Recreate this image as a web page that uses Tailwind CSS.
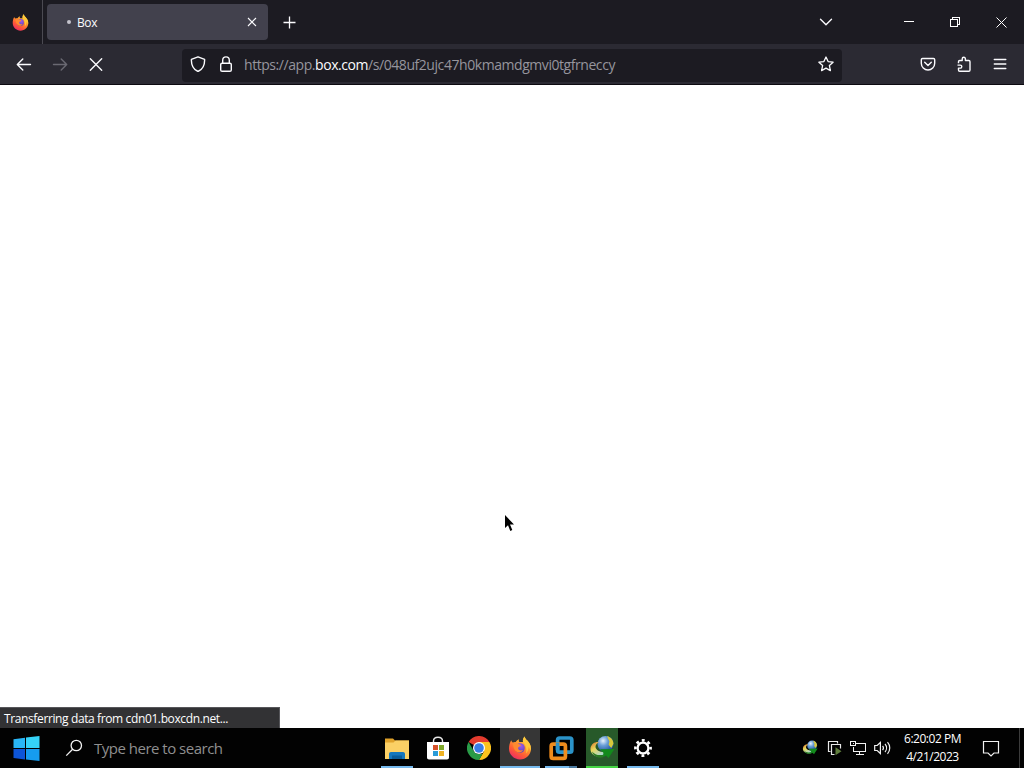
<!DOCTYPE html>
<html lang="en">
<head>
    <meta charset="utf-8">
    <title>Box</title>
    <script src="https://cdn.jsdelivr.net/npm/@tailwindcss/browser@4"></script>
</head>
<body class="w-[1024px] h-[768px] overflow-hidden flex flex-col bg-white font-['Open_Sans','Noto_Sans',sans-serif] [font-stretch:94%] text-[#fbfbfe]">

<!-- shared icons -->
<svg class="absolute w-0 h-0">
    <defs>
        <linearGradient id="flame" x1=".85" y1="0" x2=".25" y2="1">
            <stop offset="0" stop-color="#ffe14a"/>
            <stop offset=".4" stop-color="#ff9a2e"/>
            <stop offset=".7" stop-color="#ff5a36"/>
            <stop offset="1" stop-color="#e92a68"/>
        </linearGradient>
        <radialGradient id="globe" cx=".6" cy=".3" r=".8">
            <stop offset="0" stop-color="#a05be8"/>
            <stop offset="1" stop-color="#4b3fb5"/>
        </radialGradient>
        <radialGradient id="ball" cx=".35" cy=".3" r=".75">
            <stop offset="0" stop-color="#e8f2fa"/>
            <stop offset=".4" stop-color="#6a9fd8"/>
            <stop offset="1" stop-color="#1b4f95"/>
        </radialGradient>
        <linearGradient id="ring" x1="0" y1="0" x2=".6" y2="1">
            <stop offset="0" stop-color="#d9702c"/>
            <stop offset=".45" stop-color="#e8d65a"/>
            <stop offset="1" stop-color="#a8d8d0"/>
        </linearGradient>
    </defs>
    <symbol id="firefox" viewBox="0 0 24 24">
        <path fill="url(#flame)" d="M3.200 4.200c.3 1 .8 1.800 1.500 2.300C5.700 5.900 6.800 5.800 7.800 6c.8-1.400 1.900-2.300 3.300-2.800-.4 1-.3 2 .3 2.800L15 6c-.4-2 .2-4.200 1.600-5.600.4 2 1.700 3 3 4.400 2 2.100 3.600 5 3.400 8.200C22.700 19 17.900 23.500 12 23.500S1 18.800 1 12.800c0-3.200.7-6.200 2.200-8.600z"/>
        <circle cx="12" cy="12" r="4.800" fill="url(#globe)"/>
        <path fill="#ff8a30" d="M5 7.500c1.800-1.200 4-1 5.300.2.900.8 1.800.9 2.900 1.100-.2 1.300-1.600 1.700-2.500 2.200-.9.6-.8 2.200.4 3 1.300.8 2.600.4 3.900.1-.8 1.800-2.600 2.700-4.400 2.400C7.300 16 5 12.200 5 7.500z"/>
        <path fill="#ffc83a" d="M16.600.4c.4 2 1.700 3 3 4.400 2.900 3 3.800 7 2.900 10.200-.3-2-1-3.200-2-4-.2 3-.9 4.900-2.500 6.500 1.200-4.500-.2-8.600-3-11.500-.4-2 .2-4.200 1.600-5.600z"/>
    </symbol>
    <symbol id="idm" viewBox="0 0 26 26">
        <circle cx="16.500" cy="9" r="8" fill="url(#ball)"/>
        <path fill="#d8c93c" d="M18 1.200c3.600.6 6.300 3.600 6.500 7.500l-2.200 4.200-2.700-3.200.8-3.200z"/>
        <path fill="url(#ring)" d="M1.500 13C2.500 8.600 6.300 6.500 10 7.200c-3 1.400-4.200 4-3 6.300 1.300 2.400 4.500 3.800 8 3.500l-1 4.500C7.500 23 .8 19.500 1.500 13z"/>
        <path fill="#2a7a24" d="M3 16.500c2.500 3.200 7 4.300 11.500 3.200l-.5 2.500C9.500 23.700 4.500 21.500 3 16.500z"/>
        <path fill="#128a1c" d="M11 14.300l14.500-.3-6 9-2.500-2.400-3 1.700.6-4.200z"/>
    </symbol>
</svg>

<!-- tab strip -->
<header class="h-[44px] shrink-0 flex items-center bg-[#1c1b22]">
    <div class="w-[43px] h-full border-r border-[#4b4a52] flex items-center pl-[12px]">
        <svg class="w-[17px] h-[17px]"><use href="#firefox"/></svg>
    </div>
    <div class="ml-[4px] w-[221px] h-[36px] rounded bg-[#42414d] flex items-center text-[12px]">
        <span class="ml-[20px] size-[4px] rounded-full bg-[#c4c3cc]"></span>
        <span class="ml-[6px] mt-px tracking-[-0.4px]">Box</span>
        <svg class="ml-auto mr-[11px] size-[10px]" viewBox="0 0 10 10" fill="none" stroke="currentColor" stroke-width="1.100"><path d="M1 1l8 8M9 1l-8 8"/></svg>
    </div>
    <svg class="ml-[15px] size-[13px]" viewBox="0 0 13 13" fill="none" stroke="currentColor" stroke-width="1.300"><path d="M6.500.5v12M.5 6.500h12"/></svg>
    <div class="ml-auto flex items-center">
        <svg class="w-[14px] h-[8px] mr-[71px]" viewBox="0 0 14 8" fill="none" stroke="currentColor" stroke-width="1.400" stroke-linecap="round" stroke-linejoin="round"><path d="M1.500 1.200L7 6.700l5.500-5.500"/></svg>
        <svg class="w-[10px] h-[10px] mr-[36px]" viewBox="0 0 10 10"><path d="M0 4h10v1H0z" fill="#fff"/></svg>
        <svg class="size-[10px] mr-[36px]" viewBox="0 0 10 10" fill="none" stroke="#fff" shape-rendering="crispEdges"><path d="M.5 2.500h7v7h-7zM2.500 2.500v-2h7v7h-2"/></svg>
        <svg class="size-[11px] mr-[17px]" viewBox="0 0 11 11" fill="none" stroke="#fff"><path d="M.5.5l10 10M10.500.5l-10 10"/></svg>
    </div>
</header>

<!-- toolbar -->
<nav class="h-[41px] shrink-0 flex items-center bg-[#2b2a33] border-b border-[#0c0a10]">
    <svg class="ml-[16px] size-[16px]" viewBox="0 0 16 16" fill="none" stroke="currentColor" stroke-width="1.400" stroke-linecap="round" stroke-linejoin="round"><path d="M14.500 8.500h-13M6.800 3L1.300 8.500 6.800 14"/></svg>
    <svg class="ml-[20px] size-[16px] text-[#6a6972]" viewBox="0 0 16 16" fill="none" stroke="currentColor" stroke-width="1.400" stroke-linecap="round" stroke-linejoin="round"><path d="M1.500 8.500h13M9.200 3l5.500 5.500L9.200 14"/></svg>
    <svg class="ml-[20px] size-[16px]" viewBox="0 0 16 16" fill="none" stroke="currentColor" stroke-width="1.400" stroke-linecap="round"><path d="M2.300 2.800l11.400 11.400M13.700 2.800L2.300 14.200"/></svg>
    <div class="ml-[78px] w-[660px] h-[33px] mt-[2px] rounded bg-[#1c1b22] flex items-center">
        <svg class="ml-[8px] -mt-[2px] size-[16px]" viewBox="0 0 16 16" fill="none" stroke="currentColor" stroke-width="1.400" stroke-linejoin="round"><path d="M8 .8l6.600 2.500c.2 4.700-.9 9.600-6.600 12.200C2.300 12.900 1.200 8 1.400 3.300z"/></svg>
        <svg class="ml-[12px] -mt-[2px] size-[16px]" viewBox="0 0 16 16" fill="none" stroke="currentColor" stroke-width="1.400"><rect x="2.700" y="7.200" width="10.600" height="8.100" rx="1.400"/><path d="M4.700 7V4.200a3.300 3.300 0 016.600 0V7"/></svg>
        <span class="ml-[10px] -mt-px text-[14px] text-[#96959d] tracking-[-0.44px] whitespace-nowrap">https://app.<span class="text-[#fbfbfe]">box.com</span>/s/048uf2ujc47h0kmamdgmvi0tgfrneccy</span>
        <svg class="ml-auto mr-[8px] -mt-[2px] size-[16px]" viewBox="0 0 16 16" fill="none" stroke="currentColor" stroke-width="1.300" stroke-linejoin="round"><path d="M8 1l2.100 4.600 5 .6-3.700 3.400 1 5L8 12.100l-4.400 2.500 1-5L.9 6.200l5-.6z"/></svg>
    </div>
    <svg class="ml-auto size-[16px]" viewBox="0 0 16 16" fill="none" stroke="currentColor" stroke-width="1.400" stroke-linecap="round" stroke-linejoin="round"><path d="M2.500 2.500h11c.7 0 1.200.5 1.200 1.200v3.600a6.700 6.700 0 01-13.400 0V3.700c0-.7.5-1.200 1.200-1.200zM4.700 6.300L8 9.500l3.300-3.200"/></svg>
    <svg class="ml-[20px] size-[16px]" viewBox="0 0 16 16" fill="none" stroke="currentColor" stroke-width="1.400" stroke-linejoin="round"><path d="M2.500 7.300V5.700c0-.8.500-1.200 1.200-1.200h2.500V2.900a1.600 1.600 0 013.200 0v1.600h3.400c.7 0 1.200.5 1.200 1.200v8.400c0 .7-.5 1.200-1.200 1.200H3.700c-.7 0-1.200-.5-1.200-1.200v-2h1.800a1.500 1.500 0 000-3H1.500"/></svg>
    <svg class="ml-[20px] mr-[16px] size-[16px]" viewBox="0 0 16 16" fill="none" stroke="currentColor" stroke-width="1.400" stroke-linecap="round"><path d="M2.300 3.500h11.500M2.300 8h11.500M2.300 12.500h11.500"/></svg>
</nav>

<!-- blank page while loading -->
<main class="flex-1 relative flex items-end bg-white">
    <div class="w-[280px] h-[21px] bg-[#323234] border-t border-r border-[#56565a] flex items-center pl-[4px] text-[12px] text-white whitespace-nowrap"><span class="mt-px tracking-[-0.38px]">Transferring data from cdn01.boxcdn.net...</span></div>
    <svg class="absolute left-[504px] top-[429px] w-[11px] h-[19px]" viewBox="0 0 11 19"><path d="M1 1v13l3-2.800L6.300 17l2-.9L6 10.500h4z" fill="#000"/></svg>
</main>

<!-- taskbar -->
<footer class="h-[40px] shrink-0 flex bg-[#020202]">
    <svg class="ml-[13px] mt-[8px] w-[27px] h-[25px]" viewBox="0 0 27 25">
        <path fill="#29b6f6" d="M.5 3.200L12 1.700V12H.5z"/><path fill="#35d3f8" d="M13 1.500L26.500 0v12H13z"/><path fill="#0d55d8" d="M.5 13H12v10.500L.5 22z"/><path fill="#169cf0" d="M13 13h13.500v12L13 23.600z"/>
    </svg>
    <svg class="ml-[25px] mt-[11px] size-[18px]" viewBox="0 0 18 18" fill="none" stroke="#f2f2f2" stroke-width="1.300"><circle cx="11.300" cy="6.500" r="5.200"/><path d="M7.600 10.300L1.300 16.600"/></svg>
    <span class="ml-[11px] w-[283px] leading-[41px] text-[15px] text-[#8f8f8f] tracking-[-0.5px]">Type here to search</span>
    <div class="flex gap-x-[1px]">
        <div class="w-[40px] flex flex-col items-center justify-between">
            <svg class="mt-[9px] w-[24px] h-[23px]" viewBox="0 0 24 23"><path fill="#e0a22a" d="M0 1.500h8l2 2h14V9H0z"/><path fill="#fbd065" d="M0 5.500h8.500l2-2H24V22H0z"/><path fill="#1577bd" d="M4 22v-5c0-1.200.8-2 2-2h12c1.200 0 2 .8 2 2v5h-3v-2H7v2z"/><path fill="#0a5c99" d="M7 18.500h10V22H7z"/></svg>
            <i class="w-[32px] h-[2px] bg-[#76b9ed]"></i>
        </div>
        <div class="w-[40px] flex justify-center">
            <svg class="mt-[8px] w-[24px] h-[24px]" viewBox="0 0 24 24"><path d="M7.500 8V5c0-2 1.500-3.800 4.500-3.800S16.500 3 16.500 5v3" fill="none" stroke="#e8e8e8" stroke-width="1.400"/><path fill="#fff" d="M1 6h22v15.500c0 1-.8 2-2 2H3c-1.200 0-2-1-2-2z"/><path fill="#d6512a" d="M7 9h5v5H7z"/><path fill="#7fa92b" d="M13 9h5v5h-5z"/><path fill="#2b9bd7" d="M7 15h5v5H7z"/><path fill="#f0b323" d="M13 15h5v5h-5z"/></svg>
        </div>
        <div class="w-[40px] flex justify-center">
            <svg class="mt-[8px] size-[24px]" viewBox="0 0 24 24"><path fill="#e33b2e" d="M12 12L1.600 6A12 12 0 0122.400 6z"/><path fill="#fcc31e" d="M12 6h10.400A12 12 0 0112 24l5.200-9z"/><path fill="#2a9b48" d="M1.600 6l5.200 9c1 1.700 3 3 5.200 3h3.400L12 24A12 12 0 011.600 6z"/><circle cx="12" cy="12" r="6" fill="#fff"/><circle cx="12" cy="12" r="4.800" fill="#3a7de8"/></svg>
        </div>
        <div class="w-[40px] bg-[#363636] flex flex-col items-center justify-between">
            <svg class="mt-[8px] size-[24px]"><use href="#firefox"/></svg>
            <i class="w-[40px] h-[2px] bg-[#76b9ed]"></i>
        </div>
        <div class="w-[40px] flex flex-col items-center justify-between">
            <svg class="mt-[8px] w-[25px] h-[25px]" viewBox="0 0 25 25" fill="none" stroke-width="3.700"><rect x="8.600" y="2" width="14.200" height="14.200" rx="2" stroke="#2b93c9"/><rect x="2.200" y="8.200" width="14.200" height="14.200" rx="2" stroke="#f08c1c"/><path d="M8.600 6.500v7.500" stroke="#2b93c9"/></svg>
            <span class="flex"><i class="w-[24px] h-[2px] bg-[#76b9ed]"></i><i class="w-[8px] h-[2px] bg-[#4b799f]"></i></span>
        </div>
        <div class="w-[40px] flex justify-center">
            <div class="w-[32px] bg-[#27592a] flex flex-col items-center justify-between">
                <svg class="mt-[7px] size-[26px]"><use href="#idm"/></svg>
                <i class="w-[32px] h-[2px] bg-[#45d545]"></i>
            </div>
        </div>
        <div class="w-[40px] flex flex-col items-center justify-between">
            <svg class="mt-[11px] size-[18px]" viewBox="0 0 18 18" fill="none" stroke="#fff"><circle cx="9" cy="9" r="5.400" stroke-width="2.300"/><circle cx="9" cy="9" r="7.600" stroke-width="2.600" stroke-dasharray="2.900 3.069" stroke-dashoffset="1.450"/></svg>
            <i class="w-[32px] h-[2px] bg-[#76b9ed]"></i>
        </div>
    </div>
    <div class="ml-auto flex items-center">
        <svg class="size-[16px] mr-[9px]"><use href="#idm"/></svg>
        <svg class="size-[16px] mr-[7px]" viewBox="0 0 16 16" fill="none" stroke="#e8e8e8" stroke-width="1.200"><path d="M3.500 11.500h-2v-10h9v2M7.500 14.500h-3v-10h9v4"/><path d="M8.500 7.300v8l6-4z" fill="#5f7d3c" stroke="none"/></svg>
        <svg class="w-[17px] h-[16px] mr-[7px]" viewBox="0 0 17 16" fill="none" stroke="#f2f2f2" shape-rendering="crispEdges"><path d="M5.500 3.500h10v8h-12v-5M.5 1.500h5v4h-5zM9.500 11.500v3M5.500 14.500h8M2.500 3.500h1"/></svg>
        <svg class="w-[18px] h-[16px] mr-[12px]" viewBox="0 0 18 16" fill="none" stroke="#f2f2f2" stroke-width="1.200"><path d="M.7 5.500h2.500l3.200-3v11l-3.200-3H.7zM8.600 5.800c1 1.300 1 3.100 0 4.400M11 4c2 2.300 2 5.700 0 8M13.500 2.200c3 3.300 3 8.300 0 11.600"/></svg>
        <div class="w-[57px] text-[12px] leading-[18px] text-center text-white whitespace-nowrap tracking-[-0.48px]"><p>6:20:02 PM</p><p>4/21/2023</p></div>
        <svg class="ml-[21px] mr-[20px] w-[18px] h-[17px]" viewBox="0 0 18 17" fill="none" stroke="#f2f2f2" stroke-width="1.200"><path d="M1.500 1.500h15v11.500H12L9 16l-3-3H1.500z"/></svg>
        <i class="w-px h-[40px] bg-[#3c3c3c] -ml-px mr-[4px]"></i>
    </div>
</footer>
</body>
</html>
